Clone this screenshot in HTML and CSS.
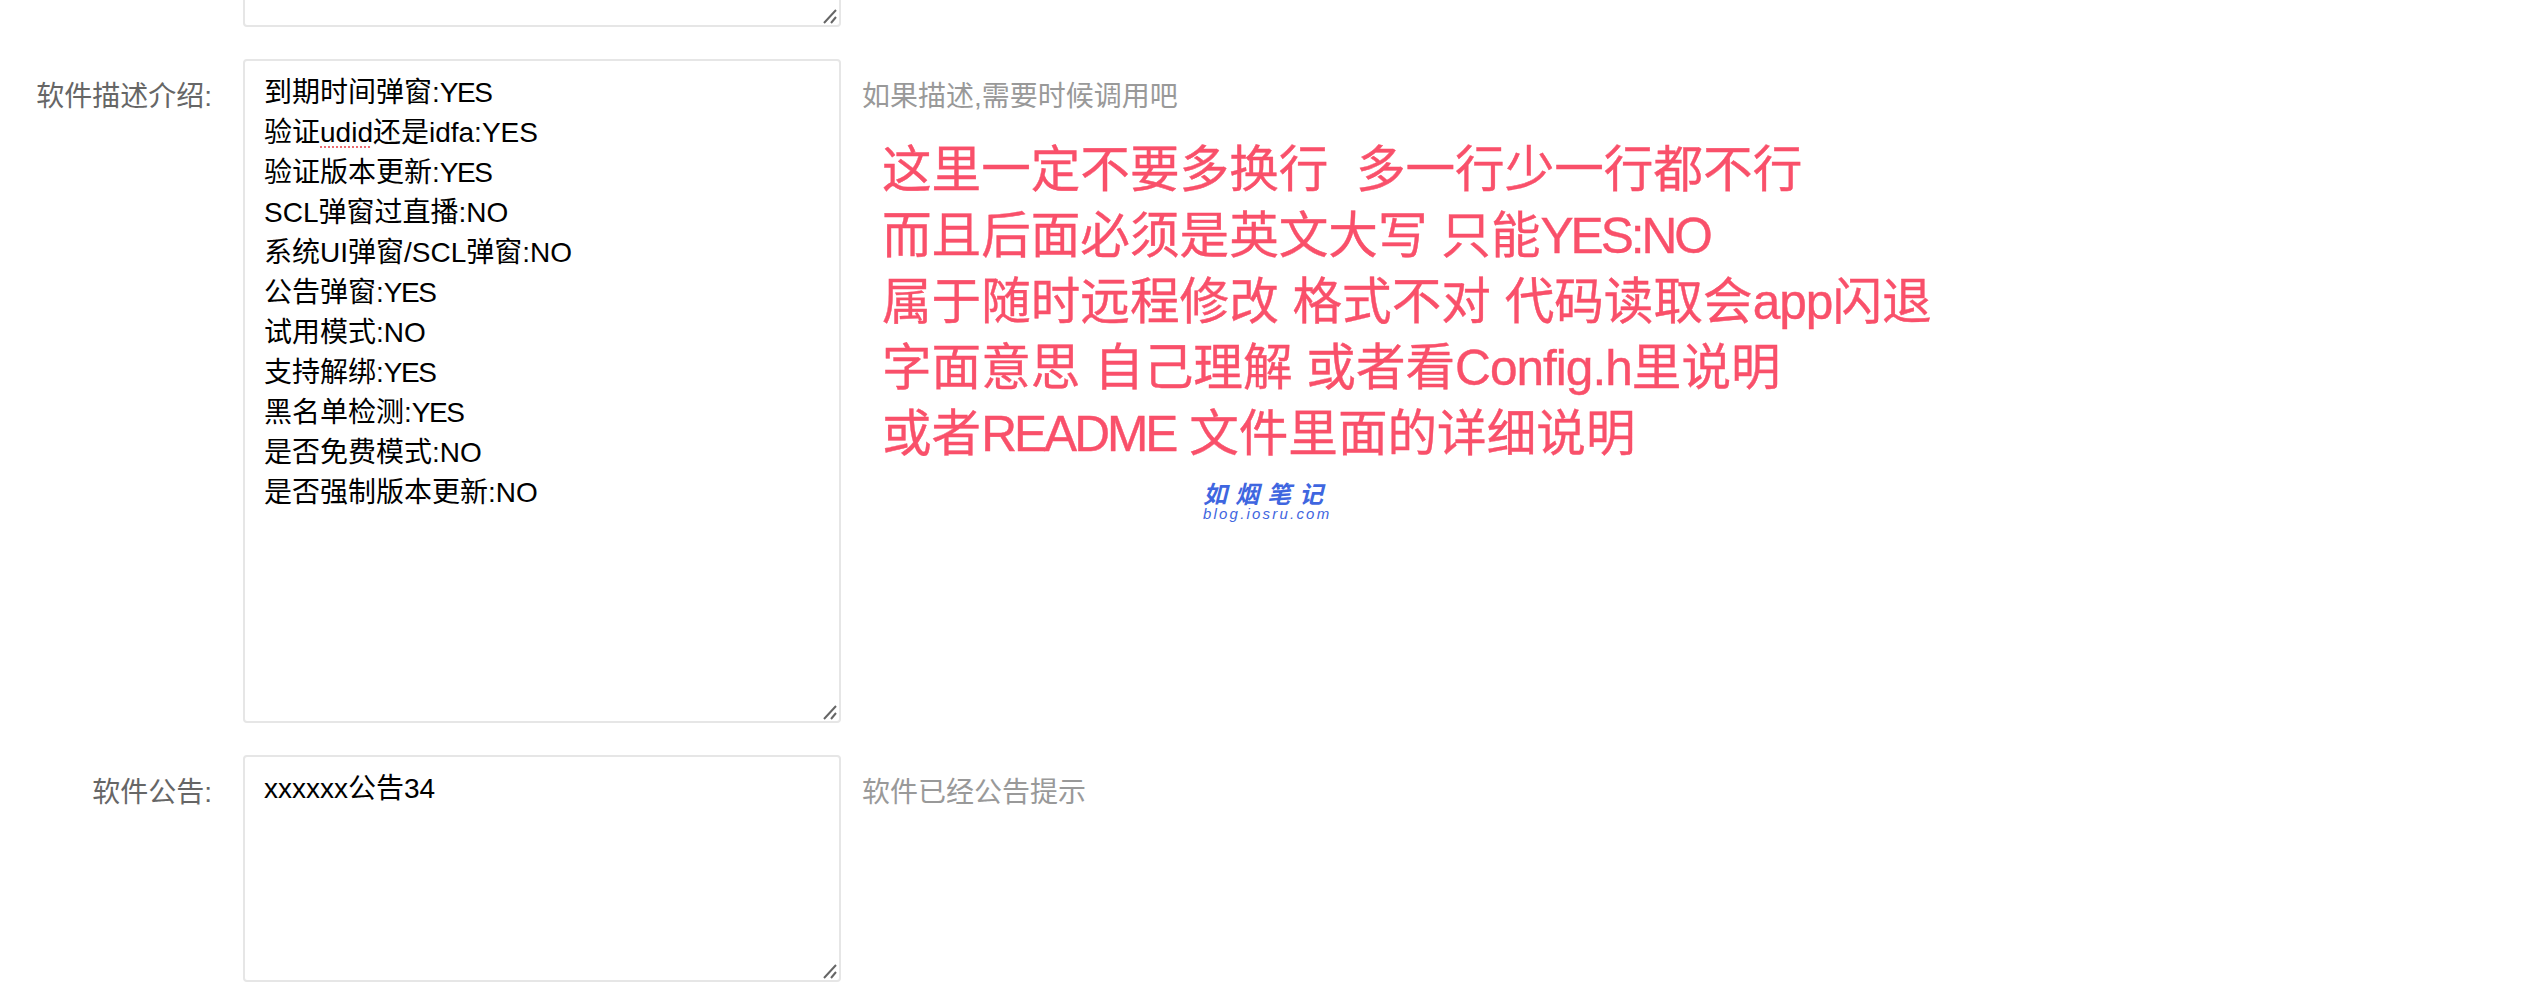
FILE: index.html
```html
<!DOCTYPE html>
<html lang="zh-CN">
<head>
    <meta charset="UTF-8">
    <title>软件设置</title>
    <link rel="stylesheet" href="styles.css">
</head>
<body>
    <div class="form">
        <div class="form-item">
            <div class="form-label"></div>
            <div class="textarea textarea-top">
                <svg class="grip" viewBox="0 0 16 16"><path d="M2 15 14 2M9 15l5-6"/></svg>
            </div>
        </div>

        <!-- 软件描述 -->
        <div class="form-item">
            <label class="form-label">软件描述介绍:</label>
            <div class="textarea textarea-desc">
                <div>到期时间弹窗:<span class="yes">YES</span></div>
                <div>验证<span class="spell">udid</span>还是idfa:YES</div>
                <div>验证版本更新:<span class="yes">YES</span></div>
                <div>SCL弹窗过直播:NO</div>
                <div>系统UI弹窗/SCL弹窗:NO</div>
                <div>公告弹窗:<span class="yes">YES</span></div>
                <div>试用模式:NO</div>
                <div>支持解绑:<span class="yes">YES</span></div>
                <div>黑名单检测:<span class="yes">YES</span></div>
                <div>是否免费模式:NO</div>
                <div>是否强制版本更新:NO</div>
                <svg class="grip" viewBox="0 0 16 16"><path d="M2 15 14 2M9 15l5-6"/></svg>
            </div>
            <div class="side">
                <div class="form-mid">如果描述,需要时候调用吧</div>
                <div class="note">
                    <div>这里一定不要多换行&nbsp; 多一行少一行都不行</div>
                    <div>而且后面必须是英文大写 只能<span class="caps">YES:NO</span></div>
                    <div>属于随时远程修改 格式不对 代码读取会<span class="lower">app</span>闪退</div>
                    <div>字面意思 自己理解 或者看<span class="lower">Config.h</span>里说明</div>
                    <div>或者<span class="caps">README</span> 文件里面的详细说明</div>
                </div>
                <div class="mark">
                    <div class="mark-name">如烟笔记</div>
                    <div class="mark-url">blog.iosru.com</div>
                </div>
            </div>
        </div>

        <!-- 软件公告 -->
        <div class="form-item">
            <label class="form-label">软件公告:</label>
            <div class="textarea textarea-notice">
                <div>xxxxxx公告34</div>
                <svg class="grip" viewBox="0 0 16 16"><path d="M2 15 14 2M9 15l5-6"/></svg>
            </div>
            <div class="side">
                <div class="form-mid">软件已经公告提示</div>
            </div>
        </div>
    </div>
</body>
</html>
```

FILE: styles.css
```css
html, body {
    height: 100%;
}

body {
    margin: 0;
    overflow: hidden;
    background-color: #fff;
    font-family: "Liberation Sans", "Noto Sans CJK SC", sans-serif;
    font-size: 28px;
    line-height: 40px;
    color: #000;
}

.form {
    margin-top: -100px;
}

.form-item {
    display: flex;
    align-items: flex-start;
    margin-bottom: 32px;
}

.form-label {
    width: 212px;
    margin-right: 31px;
    padding-top: 18px;
    flex-shrink: 0;
    text-align: right;
    color: #666;
}

.textarea {
    position: relative;
    box-sizing: border-box;
    width: 598px;
    flex-shrink: 0;
    padding: 12px 19px;
    border: 2px solid #e6e6e6;
    border-radius: 4px;
    background-color: #fff;
}

.textarea-top {
    height: 127px;
}

.textarea-desc {
    height: 664px;
}

.textarea-notice {
    height: 227px;
}

.yes {
    letter-spacing: -1.5px;
}

.spell {
    text-decoration: underline dotted #ec6a70 2px;
    text-underline-offset: 4px;
}

.grip {
    position: absolute;
    right: 1px;
    bottom: 1px;
    width: 16px;
    height: 16px;
}

.grip path {
    fill: none;
    stroke: #666;
    stroke-width: 2;
}

.side {
    margin-left: 21px;
    display: flex;
    flex-direction: column;
}

.form-mid {
    padding-top: 18px;
    color: #999;
}

.note {
    margin-top: 20px;
    padding-left: 20px;
    font-size: 49.6px;
    line-height: 66px;
    color: #f9506a;
    white-space: nowrap;
    -webkit-text-stroke: 0.4px #f9506a;
}

.caps {
    letter-spacing: -3px;
}

.lower {
    letter-spacing: -1px;
}

.mark {
    margin-top: 16px;
    margin-left: 341px;
    color: #3f66e0;
    font-style: italic;
}

.mark-name {
    font-size: 24px;
    font-weight: bold;
    line-height: 24px;
    letter-spacing: 8px;
}

.mark-url {
    font-size: 15px;
    line-height: 14px;
    letter-spacing: 2.2px;
}
```
